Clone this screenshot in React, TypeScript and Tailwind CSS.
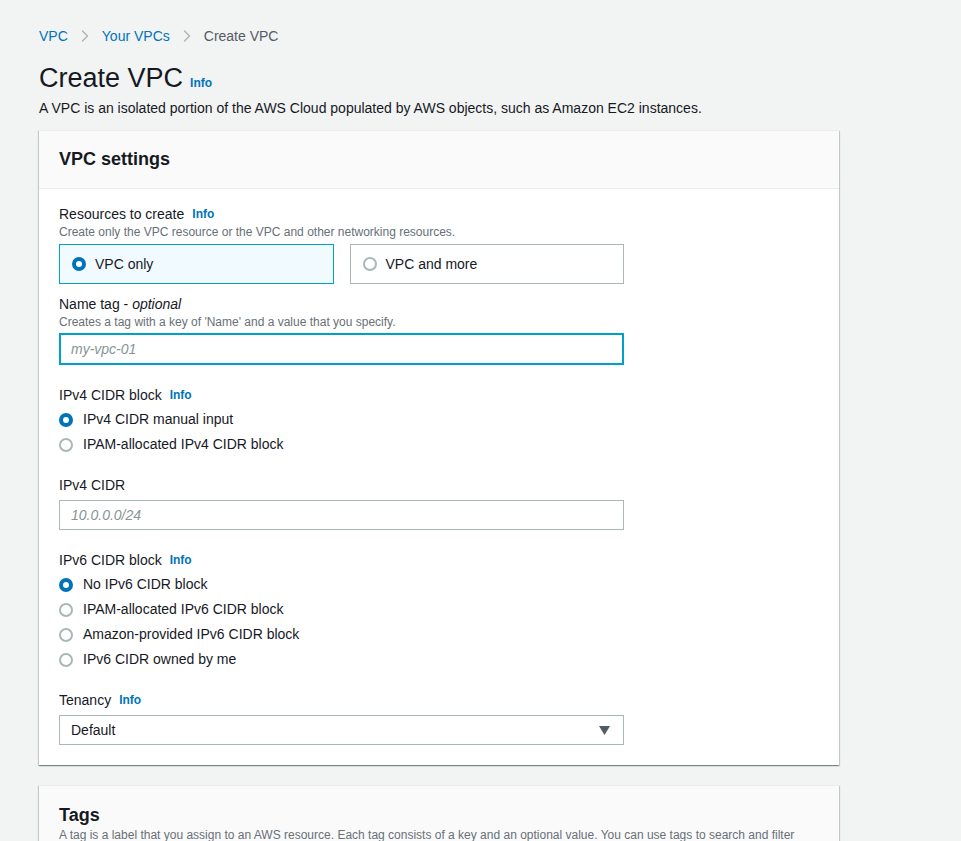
import { ChevronRight } from "lucide-react"

const font = { fontFamily: '"Liberation Sans", Arial, sans-serif' }

function Info() {
  return <span className="ml-2 text-[12px] font-bold text-[#0073bb]">Info</span>
}

function Radio({ checked }: { checked?: boolean }) {
  return checked ? (
    <span className="flex h-[14px] w-[14px] shrink-0 items-center justify-center rounded-full bg-[#0073bb]">
      <span className="h-[6px] w-[6px] rounded-full bg-white" />
    </span>
  ) : (
    <span className="h-[14px] w-[14px] shrink-0 rounded-full border-2 border-[#aab7b8] bg-white" />
  )
}

function RadioRow({ label, checked }: { label: string; checked?: boolean }) {
  return (
    <div className="flex h-[25px] items-center gap-[10px] text-[14px] text-[#16191f]">
      <Radio checked={checked} />
      <span>{label}</span>
    </div>
  )
}

function Label({ text, info, optional }: { text: string; info?: boolean; optional?: boolean }) {
  return (
    <div className="flex h-5 items-center text-[14px] text-[#16191f]">
      <span>
        {text}
        {optional && (
          <>
            {" - "}
            <i>optional</i>
          </>
        )}
      </span>
      {info && <Info />}
    </div>
  )
}

export default function App() {
  const ipv6 = [
    "No IPv6 CIDR block",
    "IPAM-allocated IPv6 CIDR block",
    "Amazon-provided IPv6 CIDR block",
    "IPv6 CIDR owned by me",
  ]

  return (
    <div className="min-h-[841px] overflow-hidden bg-[#f2f3f3] px-[39px] pt-[26px]" style={font}>
      {/* breadcrumb */}
      <nav className="flex h-5 items-center text-[14px]">
        <span className="text-[#0073bb]">VPC</span>
        <ChevronRight className="mx-[7px] h-5 w-5 text-[#aab7b8]" strokeWidth={1.75} />
        <span className="text-[#0073bb]">Your VPCs</span>
        <ChevronRight className="mx-[7px] h-5 w-5 text-[#aab7b8]" strokeWidth={1.75} />
        <span className="text-[#545b64]">Create VPC</span>
      </nav>

      <div className="mt-[14px] flex h-9 items-end">
        <h1 className="text-[27px] leading-9 text-[#16191f]">Create VPC</h1>
        <span className="mb-[4px] ml-[7px] text-[12px] font-bold text-[#0073bb]">Info</span>
      </div>
      <p className="mt-[2px] text-[14px] leading-5 text-[#16191f]">
        A VPC is an isolated portion of the AWS Cloud populated by AWS objects, such as Amazon EC2 instances.
      </p>

      {/* VPC settings card */}
      <section className="mt-3 w-[800px] border-t border-[#eaeded] bg-white shadow-[0_1px_1px_0_rgba(0,28,36,0.3),1px_1px_1px_0_rgba(0,28,36,0.15),-1px_1px_1px_0_rgba(0,28,36,0.15)]">
        <div className="border-b border-[#eaeded] bg-[#fafafa] px-5 py-[17px]">
          <h2 className="text-[18px] font-bold leading-[23px] text-[#16191f]">VPC settings</h2>
        </div>

        <div className="w-[605px] px-5 pb-5 pt-[15px]">
          <Label text="Resources to create" info />
          <p className="text-[12px] leading-4 text-[#687078]">
            Create only the VPC resource or the VPC and other networking resources.
          </p>
          <div className="mt-1 grid grid-cols-2 gap-4">
            <div className="flex h-10 items-center gap-[9px] border border-[#00a1c9] bg-[#f1faff] px-[12px] text-[14px] text-[#16191f]">
              <Radio checked />
              <span>VPC only</span>
            </div>
            <div className="flex h-10 items-center gap-[9px] border border-[#aab7b8] bg-white px-[12px] text-[14px] text-[#16191f]">
              <Radio />
              <span>VPC and more</span>
            </div>
          </div>

          <div className="mt-[10px]">
            <Label text="Name tag" optional />
            <p className="text-[12px] leading-4 text-[#687078]">
              Creates a tag with a key of 'Name' and a value that you specify.
            </p>
            <div className="mt-[3px] flex h-8 items-center border-2 border-[#00a1c9] px-[10px] text-[14px] italic text-[#879596]">
              my-vpc-01
            </div>
          </div>

          <div className="mt-5">
            <Label text="IPv4 CIDR block" info />
            <div className="mt-[2px]">
              <RadioRow label="IPv4 CIDR manual input" checked />
              <RadioRow label="IPAM-allocated IPv4 CIDR block" />
            </div>
          </div>

          <div className="mt-[18px]">
            <Label text="IPv4 CIDR" />
            <div className="mt-[5px] flex h-[30px] items-center border border-[#aab7b8] px-[11px] text-[14px] italic text-[#879596]">
              10.0.0.0/24
            </div>
          </div>

          <div className="mt-5">
            <Label text="IPv6 CIDR block" info />
            <div className="mt-[2px]">
              {ipv6.map((l, i) => (
                <RadioRow key={l} label={l} checked={i === 0} />
              ))}
            </div>
          </div>

          <div className="mt-[18px]">
            <Label text="Tenancy" info />
            <div className="mt-[5px] flex h-[30px] items-center justify-between border border-[#aab7b8] pl-[11px] pr-[13px] text-[14px] text-[#16191f]">
              <span>Default</span>
              <svg width="11" height="9" viewBox="0 0 11 9">
                <path d="M0 0h11L5.5 9z" fill="#545b64" />
              </svg>
            </div>
          </div>
        </div>
      </section>

      {/* Tags card */}
      <section className="mt-5 w-[800px] border-t border-[#eaeded] bg-[#fafafa] shadow-[0_1px_1px_0_rgba(0,28,36,0.3),1px_1px_1px_0_rgba(0,28,36,0.15),-1px_1px_1px_0_rgba(0,28,36,0.15)]">
        <div className="px-5 pb-4 pt-[18px]">
          <h2 className="text-[18px] font-bold leading-[23px] text-[#16191f]">Tags</h2>
          <p className="text-[12px] leading-4 text-[#687078]">
            A tag is a label that you assign to an AWS resource. Each tag consists of a key and an optional value. You
            can use tags to search and filter your resources or track your AWS costs.
          </p>
        </div>
      </section>
    </div>
  )
}
